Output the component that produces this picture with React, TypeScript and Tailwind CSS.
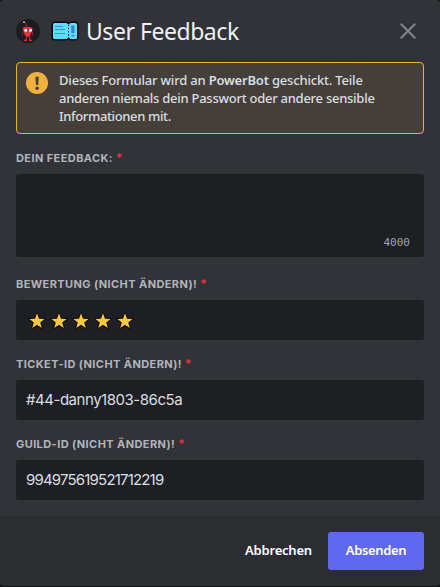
import type { ReactNode } from "react";

function BotAvatar() {
  return (
    <svg className="h-6 w-6 shrink-0" viewBox="0 0 24 24">
      <circle cx="12" cy="12" r="12" fill="#1d1c20" />
      <path d="M9.8 8 L10.6 5 L8.6 3.6" fill="none" stroke="#a72a31" strokeWidth="0.8" />
      <circle cx="8" cy="3.2" r="0.9" fill="#d8d8dc" />
      <path d="M6.6 10 Q7 7.8 11.5 7.8 Q16.2 7.8 16.6 10 L15.2 14 Q14.2 17.4 13 17.8 L10.6 17.8 Q8.6 17 8 14 Z" fill="#e5333d" />
      <path d="M7 12.5 L6.4 16.5 M16.4 12.5 L16.8 16.5" stroke="#9f2630" strokeWidth="0.9" />
      <path d="M10.2 17.5 V21 M13.6 17.5 V21" stroke="#c92d37" strokeWidth="1.1" />
      <path d="M8 21.4 H10.8 M13.2 21.4 H16" stroke="#e5333d" strokeWidth="1.3" />
      <circle cx="9.8" cy="11.2" r="1.5" fill="#fff" />
      <circle cx="14.5" cy="11.2" r="1.5" fill="#fff" />
      <path d="M11.2 11 H13.2" stroke="#332028" strokeWidth="0.9" />
    </svg>
  );
}

function TicketIcon() {
  return (
    <svg className="h-5 w-7 shrink-0" viewBox="0 0 28 20">
      <path d="M4 .5 H15.4 L17.5 1.6 L19.6 .5 H24 Q27.5 .5 27.5 4 V16 Q27.5 19.5 24 19.5 H19.6 L17.5 18.4 L15.4 19.5 H4 Q.5 19.5 .5 16 V4 Q.5 .5 4 .5 Z" fill="#08090b" />
      <path d="M3.5 2 H15.3 L17.5 3.2 L19.7 2 H24.5 Q26 2 26 3.5 V16.5 Q26 18 24.5 18 H19.7 L17.5 16.8 L15.3 18 H3.5 Q2 18 2 16.5 V3.5 Q2 2 3.5 2 Z" fill="#5edcf8" />
      <path d="M17.5 3.5 V17" stroke="#0b2a35" strokeWidth="1.1" strokeDasharray="1.6 1.6" />
      <path d="M4 5.5 H12 M4 8.5 H14 M4 12.5 H14" stroke="#338ee0" strokeWidth="1.1" />
      <rect x="20.3" y="4.5" width="3.2" height="7.8" rx="0.8" fill="#3187d8" />
      <rect x="20.3" y="14" width="3.2" height="1.6" rx="0.6" fill="#3187d8" />
    </svg>
  );
}

function Star() {
  return (
    <svg className="h-[18px] w-[18px] shrink-0" viewBox="0 0 18 18">
      <path
        d="M9 1.3 L11 6.8 L16.6 7 L12.2 10.5 L13.8 16 L9 12.8 L4.2 16 L5.8 10.5 L1.4 7 L7 6.8 Z"
        fill="#ffc83d"
        stroke="#0b0b0d"
        strokeWidth="2"
        strokeLinejoin="round"
        paintOrder="stroke"
      />
    </svg>
  );
}

function Label({ children }: { children: string }) {
  return (
    <div className="flex h-4 items-center font-['Inter',sans-serif] text-[11px] leading-4 font-bold text-[#b1b5bb]">
      <span className="tracking-[0.41px] whitespace-nowrap">{children}</span>
      <span className="ml-[3px] text-xs font-semibold text-[#e2353c]">*</span>
    </div>
  );
}

function Input({ children }: { children: ReactNode }) {
  return (
    <div className="mt-2 flex h-10 items-center rounded-[3px] bg-[#1e1f22] px-2.5 font-['Inter',sans-serif] text-[15px] text-[#dbdee1]">
      {children}
    </div>
  );
}

export default function App() {
  return (
    <div className="h-[587px] w-[440px] bg-[#111214] font-['Noto_Sans',sans-serif]">
      <div className="flex h-[586px] flex-col overflow-hidden rounded-[4px] bg-[#313338]">
        <header className="flex h-[62px] shrink-0 items-center pr-6 pl-4">
          <BotAvatar />
          <div className="ml-[11px] flex items-center">
            <TicketIcon />
          </div>
          <h1 className="ml-[7px] text-[23px] leading-[30px] tracking-[-0.46px] whitespace-nowrap text-[#eff0f2]">User Feedback</h1>
          <svg className="ml-auto h-4 w-4" viewBox="0 0 16 16">
            <path d="M.8 .8 L15.2 15.2 M15.2 .8 L.8 15.2" stroke="#84868b" strokeWidth="2" />
          </svg>
        </header>

        <main className="flex h-[454px] shrink-0 flex-col px-4">
          <div className="flex h-[72px] shrink-0 rounded-[4px] border border-[#f0b132] bg-[#443f39] px-[9px] py-2">
            <svg className="mt-px h-[22px] w-[22px] shrink-0" viewBox="0 0 22 22">
              <circle cx="11" cy="11" r="11" fill="#f0b13f" />
              <path d="M9.4 4.8 H12.8 L12.2 13 H10 Z" fill="#443f39" />
              <circle cx="11.1" cy="16.2" r="1.7" fill="#443f39" />
            </svg>
            <p className="ml-[11px] text-[13px] leading-[18px] font-medium whitespace-nowrap text-[#dbdee1]">
              <span className="block tracking-[-0.19px]">
                Dieses Formular wird an <b className="font-semibold">PowerBot</b> geschickt. Teile
              </span>
              <span className="block tracking-[-0.26px]">anderen niemals dein Passwort oder andere sensible</span>
              <span className="block tracking-[-0.37px]">Informationen mit.</span>
            </p>
          </div>

          <div className="mt-4">
            <Label>DEIN FEEDBACK:</Label>
            <div className="mt-2 flex h-[83px] items-end justify-end rounded-[3px] bg-[#1e1f22] pr-[14px] pb-[7px] font-['DejaVu_Sans_Mono',monospace] text-[11px] leading-[14px] text-[#a0a5ad]">
              4000
            </div>
          </div>

          <div className="mt-[19px]">
            <Label>BEWERTUNG (NICHT ÄNDERN)!</Label>
            <Input>
              <div className="ml-0.5 flex gap-1 pt-0.5">
                <Star />
                <Star />
                <Star />
                <Star />
                <Star />
              </div>
            </Input>
          </div>

          <div className="mt-4">
            <Label>TICKET-ID (NICHT ÄNDERN)!</Label>
            <Input>
              <span className="tracking-[-0.47px]">#44-danny1803-86c5a</span>
            </Input>
          </div>

          <div className="mt-4">
            <Label>GUILD-ID (NICHT ÄNDERN)!</Label>
            <Input>
              <span className="tracking-[-0.82px]">994975619521712219</span>
            </Input>
          </div>
        </main>

        <footer className="flex h-[70px] shrink-0 items-center justify-end bg-[#2b2d31] px-4 text-[13px] font-semibold text-white">
          <button className="w-[99px] tracking-[-0.2px] whitespace-nowrap">Abbrechen</button>
          <button className="h-[38px] w-24 rounded-[3px] bg-[#5e67ee] tracking-[-0.35px] whitespace-nowrap">Absenden</button>
        </footer>
      </div>
    </div>
  );
}
